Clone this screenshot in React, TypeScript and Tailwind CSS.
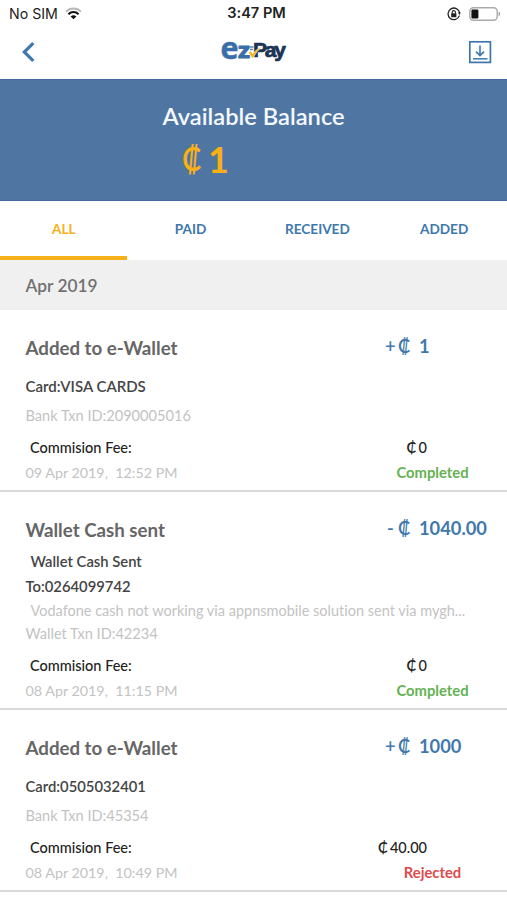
import { useState } from 'react';
import clsx from 'clsx';

interface Line {
  text: string;
  className: string;
}

interface Transaction {
  id: string;
  title: string;
  sign: '+' | '-';
  amount: string;
  lines: Line[];
  fee: string;
  date: string;
  status: 'Completed' | 'Rejected';
}

const tabs = ['ALL', 'PAID', 'RECEIVED', 'ADDED'];

const transactions: Transaction[] = [
  {
    id: '2090005016',
    title: 'Added to e-Wallet',
    sign: '+',
    amount: '1',
    lines: [
      { text: 'Card:VISA CARDS', className: 'mt-[14px] text-[15px] font-semibold text-[#444]' },
      { text: 'Bank Txn ID:2090005016', className: 'mt-[10px] text-[14.6px] text-[#c3c3c3]' },
    ],
    fee: '0',
    date: '09 Apr 2019,  12:52 PM',
    status: 'Completed',
  },
  {
    id: '42234',
    title: 'Wallet Cash sent',
    sign: '-',
    amount: '1040.00',
    lines: [
      { text: 'Wallet Cash Sent', className: 'mt-[7px] ml-[5px] text-[14.8px] font-semibold text-[#444]' },
      { text: 'To:0264099742', className: 'mt-[5px] text-[14.8px] font-semibold text-[#444]' },
      {
        text: 'Vodafone cash not working via appnsmobile solution sent via mygh...',
        className: 'mt-[5px] ml-[5px] text-[14.5px] text-[#c3c3c3]',
      },
      { text: 'Wallet Txn ID:42234', className: 'mt-[3px] text-[14.6px] text-[#c3c3c3]' },
    ],
    fee: '0',
    date: '08 Apr 2019,  11:15 PM',
    status: 'Completed',
  },
  {
    id: '45354',
    title: 'Added to e-Wallet',
    sign: '+',
    amount: '1000',
    lines: [
      { text: 'Card:0505032401', className: 'mt-[14px] text-[14.8px] font-semibold text-[#444]' },
      { text: 'Bank Txn ID:45354', className: 'mt-[10px] text-[14.6px] text-[#c3c3c3]' },
    ],
    fee: '40.00',
    date: '08 Apr 2019,  10:49 PM',
    status: 'Rejected',
  },
];

const StatusBar = () => (
  <div className="grid h-[27px] grid-cols-3 items-center pr-[6px] pl-[9px] font-[Inter,sans-serif] text-[14.2px] text-[#222]">
    <div className="flex items-center gap-[7px]">
      <span>No SIM</span>
      <svg width="17" height="13" viewBox="0 0 17 13" fill="none">
        <path d="M1 4.6C5.2.5 11.8.5 16 4.6" stroke="#b9b9b9" strokeWidth="1.9" />
        <path d="M3.4 7.2c2.9-2.8 7.3-2.8 10.2 0" stroke="#111" strokeWidth="2" />
        <path d="M5.6 9.4c1.7-1.6 4.1-1.6 5.8 0L8.5 12.3z" fill="#111" />
      </svg>
    </div>
    <span className="pt-px pl-[3px] text-center text-[14.6px] font-semibold">3:47 PM</span>
    <div className="flex items-center justify-end gap-[8px]">
      <svg width="14" height="14" viewBox="0 0 14 14" fill="none" stroke="#222">
        <path d="M12.4 8.6A5.8 5.8 0 1 1 12.6 6" strokeWidth="1.3" />
        <path d="M10.9 5.6h3L12.5 8z" fill="#222" stroke="none" />
        <rect x="4.2" y="6.3" width="5.2" height="3.9" fill="#222" stroke="none" />
        <path d="M5.2 6.4V5.2a1.6 1.6 0 0 1 3.2 0v1.2" strokeWidth="1.1" />
      </svg>
      <svg width="32" height="14" viewBox="0 0 32 14" fill="none">
        <rect x=".8" y=".8" width="27.4" height="12.4" rx="3.6" stroke="#aaa" strokeWidth="1.4" />
        <rect x="2.4" y="2.6" width="7" height="8.8" rx="1.2" fill="#111" />
        <path d="M29.6 4.8c1.9.6 1.9 3.8 0 4.4z" fill="#999" />
      </svg>
    </div>
  </div>
);

const Logo = () => (
  <svg className="overflow-visible" width="72" height="50" viewBox="0 0 72 50" fontWeight="700">
    <g fontFamily="Open Sans, sans-serif" fill="#386fa8" stroke="#386fa8">
      <text x="3.5" y="31.5" fontSize="30" strokeWidth=".5" textLength="18" lengthAdjust="spacingAndGlyphs">e</text>
      <text x="21" y="31" fontSize="21" strokeWidth=".9" textLength="12" lengthAdjust="spacingAndGlyphs">z</text>
    </g>
    <text x="36" y="30" fontFamily="Liberation Sans, sans-serif" fontSize="21" fill="#1b3354" stroke="#1b3354" strokeWidth=".7" textLength="33" lengthAdjust="spacing">Pay</text>
    <path d="M33 20h3.5M33 22.5h3" stroke="#5b86b5" strokeWidth="1.3" />
    <path d="M31.5 25.2l2.2-1.2 2 2.8c2.400-3 5.500-5.600 9.800-7.600-4 3.400-7 7.200-9.300 11.800h-1.400z" fill="#f9b31c" stroke="#fff" strokeWidth=".5" />
  </svg>
);

const Header = () => (
  <header className="grid h-[52px] grid-cols-3 items-center pr-[15px] pb-[2px] pl-[22px]">
    <svg width="13" height="20" viewBox="0 0 13 20" fill="none">
      <path d="M11.3 1.2L2.3 10l9 8.8" stroke="#4079ad" strokeWidth="3.2" />
    </svg>
    <div className="flex justify-center pr-[8px]">
      <Logo />
    </div>
    <svg className="justify-self-end" width="24" height="24" viewBox="0 0 24 24" fill="none" stroke="#3d76ab">
      <rect x="1.8" y="1.8" width="20.6" height="20.6" strokeWidth="1.7" />
      <path d="M12 5.6v9.6M8 11.6l4 4 4-4" strokeWidth="1.6" />
      <path d="M5 18.8h14.5" strokeWidth="1.5" />
    </svg>
  </header>
);

const TransactionRow = ({ transaction }: { transaction: Transaction }) => {
  const { title, sign, amount, lines, fee, date, status } = transaction;

  return (
    <li className="border-b-2 border-[#d8d8d8] pt-6 pb-[7px] pl-[25.5px] leading-5">
      <div className="flex h-7 items-center">
        <h3 className="w-[359.5px] text-[18.7px] font-bold text-[#666]">{title}</h3>
        <div className="flex -translate-y-[2px] items-center text-[18.3px] font-bold text-[#4078ac]">
          <span className={clsx('w-[13px] font-semibold', sign === '-' && 'pl-[2px]')}>{sign}</span>
          <span className="w-[21px] font-semibold">₡</span>
          <span>{amount}</span>
        </div>
      </div>

      {lines.map((line) => (
        <p key={line.text} className={clsx('h-5 whitespace-nowrap', line.className)}>
          {line.text}
        </p>
      ))}

      <div className="mt-3 flex h-5 justify-between pr-20 pl-[4.5px] text-[14.5px] font-medium text-[#222]">
        <span>Commision Fee:</span>
        <span className="flex gap-[2px]">
          <span className="font-semibold">₵</span>
          {fee}
        </span>
      </div>
      <div className="mt-[5px] flex h-5 justify-between pr-[24.5px]">
        <span className="text-[14.3px] whitespace-pre text-[#c3c3c3]">{date}</span>
        <span
          className={clsx(
            '-mt-px w-[100px] text-center text-[14.8px] font-bold',
            status === 'Completed' ? 'text-[#65b252]' : 'text-[#dc4c4e]'
          )}
        >
          {status}
        </span>
      </div>
    </li>
  );
};

const App = () => {
  const [activeTab, setActiveTab] = useState('ALL');

  return (
    <div className="h-[900px] w-[507px] overflow-hidden bg-white font-[Lato,sans-serif] [font-variant-ligatures:none]">
      <StatusBar />
      <Header />

      {/* Balance */}
      <section className="h-[122px] border-y border-[#45699a] bg-[#4f76a2] pt-[20px]">
        <h1 className="text-center text-[23.7px] leading-8 font-semibold text-[#f4f8ff]">Available Balance</h1>
        <div className="mt-[5px] flex pl-[182px] text-[36px] leading-[44px] font-bold text-[#f9b016]">
          <span className="w-[26px] origin-left scale-x-90 text-[32px] font-semibold">₡</span>
          <span>1</span>
        </div>
      </section>

      {/* Tabs */}
      <nav className="grid h-[59px] grid-cols-4">
        {tabs.map((tab) => (
          <button
            key={tab}
            onClick={() => setActiveTab(tab)}
            className={clsx(
              'border-b-4 pt-[2px] pl-px text-[13.6px] font-bold',
              activeTab === tab ? 'border-[#f4b119] text-[#f4b119]' : 'border-transparent text-[#4078ac]'
            )}
          >
            {tab}
          </button>
        ))}
      </nav>

      <h2 className="flex h-[50px] items-center bg-[#f0f0f0] pt-[2px] pl-[25.5px] text-[17.3px] font-semibold text-[#707070]">
        Apr 2019
      </h2>

      <ul>
        {transactions.map((transaction) => (
          <TransactionRow key={transaction.id} transaction={transaction} />
        ))}
      </ul>
    </div>
  );
};

export default App;
